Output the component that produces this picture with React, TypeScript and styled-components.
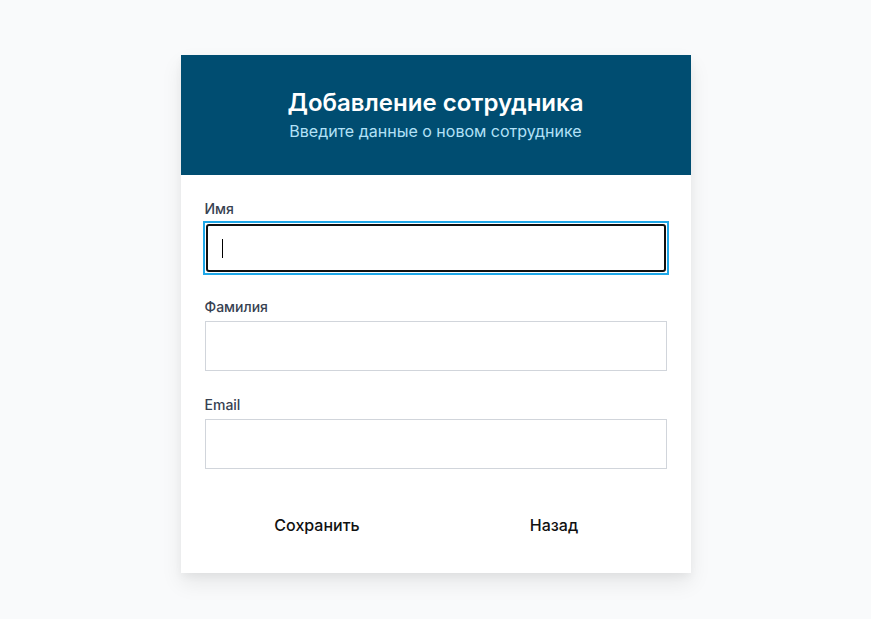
import React from "react";
import styled, { createGlobalStyle } from "styled-components";

const GlobalStyle = createGlobalStyle`
  * { box-sizing: border-box; }
  html, body { margin: 0; padding: 0; }
  body {
    background: #f9fafb;
    font-family: Inter, "Noto Sans", sans-serif;
  }
`;

const Page = styled.div`
  min-height: 619px;
  display: flex;
  justify-content: center;
  padding-top: 55px;
`;

const Card = styled.div`
  width: 510px;
  align-self: flex-start;
  background: #ffffff;
  box-shadow: 0 10px 20px rgba(0, 0, 0, 0.08), 0 4px 8px rgba(0, 0, 0, 0.04);
`;

const Header = styled.div`
  height: 120px;
  background: #004d71;
  display: flex;
  flex-direction: column;
  align-items: center;
  justify-content: center;
`;

const Title = styled.h1`
  margin: 0;
  font-size: 24px;
  line-height: 32px;
  font-weight: 600;
  color: #ffffff;
`;

const Subtitle = styled.p`
  margin: 0;
  font-size: 16px;
  line-height: 24px;
  color: #b3e1f7;
`;

const Body = styled.form`
  padding: 24px;
  display: flex;
  flex-direction: column;
`;

const Field = styled.div`
  display: flex;
  flex-direction: column;
  gap: 4px;
  margin-bottom: 24px;
`;

const Label = styled.label`
  font-size: 14px;
  line-height: 20px;
  font-weight: 500;
  color: #374151;
`;

const InputFrame = styled.div`
  position: relative;
  height: 50px;
  border: 1px solid #d1d5db;
  background: #fff;
  &:focus-within {
    border-color: #ffffff;
    box-shadow: 0 0 0 2px #1ea7e8;
  }
`;

const Input = styled.input`
  display: block;
  width: 100%;
  height: 100%;
  border: 2px solid transparent;
  border-radius: 3px;
  padding: 0 14px;
  font-family: inherit;
  font-size: 16px;
  color: #111827;
  background: transparent;
  outline: none;
  &:focus {
    border-color: #101010;
  }
`;

const Caret = styled.span`
  position: absolute;
  left: 16px;
  top: 15px;
  width: 1px;
  height: 19px;
  background: #000;
  pointer-events: none;
`;

const Actions = styled.div`
  display: grid;
  grid-template-columns: 1fr 1fr;
  gap: 12px;
  margin-top: 8px;
`;

const Button = styled.button`
  height: 48px;
  border: none;
  background: transparent;
  font-family: inherit;
  font-size: 16px;
  font-weight: 500;
  color: #111111;
  cursor: pointer;
`;

export default function App() {
  const [first, setFirst] = React.useState("");
  return (
    <>
      <GlobalStyle />
      <Page>
        <Card>
          <Header>
            <Title>Добавление сотрудника</Title>
            <Subtitle>Введите данные о новом сотруднике</Subtitle>
          </Header>
          <Body onSubmit={(e) => e.preventDefault()}>
            <Field>
              <Label htmlFor="firstName">Имя</Label>
              <InputFrame>
                <Input
                  id="firstName"
                  autoFocus
                  value={first}
                  onChange={(e) => setFirst(e.target.value)}
                  style={{ caretColor: first ? "auto" : "transparent" }}
                />
                {!first && <Caret />}
              </InputFrame>
            </Field>
            <Field>
              <Label htmlFor="lastName">Фамилия</Label>
              <InputFrame>
                <Input id="lastName" />
              </InputFrame>
            </Field>
            <Field>
              <Label htmlFor="email">Email</Label>
              <InputFrame>
                <Input id="email" type="email" />
              </InputFrame>
            </Field>
            <Actions>
              <Button type="submit">Сохранить</Button>
              <Button type="button">Назад</Button>
            </Actions>
          </Body>
        </Card>
      </Page>
    </>
  );
}
